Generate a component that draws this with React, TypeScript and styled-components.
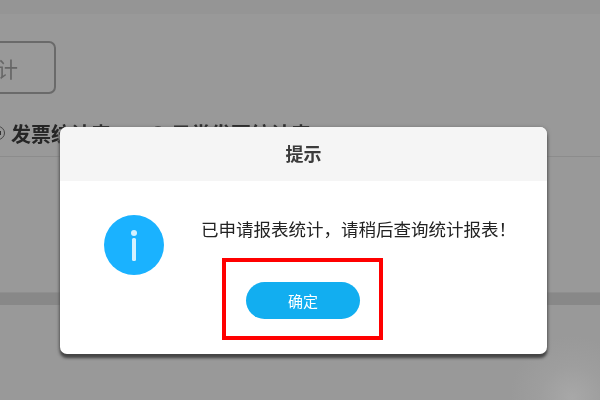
import React from "react";
import styled, { createGlobalStyle } from "styled-components";

const Global = createGlobalStyle`
  html, body { margin: 0; padding: 0; width: 600px; height: 400px; overflow: hidden; background: #999; }
  body { font-family: "Liberation Sans", "Noto Sans CJK SC", sans-serif; }
`;

const Page = styled.div`
  position: relative;
  width: 600px;
  height: 400px;
  overflow: hidden;
  display: flex;
  flex-direction: column;
  filter: blur(0.35px);
  background:
    radial-gradient(circle at 572px 398px, #a8a8a8 0, #9e9e9e 32px, rgba(153, 153, 153, 0) 62px),
    #999;
`;

const TopStrip = styled.div`
  height: 14px;
  flex: none;
  background: #959595;
`;

const Toolbar = styled.div`
  flex: none;
  height: 143px;
  box-sizing: border-box;
  padding-top: 27px;
  border-bottom: 1px solid #8c8c8c;
`;

const TabButton = styled.button`
  display: flex;
  align-items: center;
  justify-content: flex-end;
  box-sizing: border-box;
  width: 120px;
  height: 53px;
  margin: 0 0 0 -64px;
  padding: 0 36px 0 0;
  border: 2px solid #6a6a6a;
  border-radius: 7px;
  background: transparent;
  color: #666;
  font: 400 21px "Liberation Sans", "Noto Sans CJK SC", sans-serif;
  white-space: nowrap;
`;

const RadioRow = styled.div`
  display: flex;
  align-items: center;
  margin: 26px 0 0 -9px;
  height: 26px;
`;

const Radio = styled.span<{ $checked?: boolean }>`
  flex: none;
  box-sizing: border-box;
  width: 14px;
  height: 14px;
  margin-right: 6px;
  border: 1px solid #444;
  border-radius: 50%;
  background: ${(p) => (p.$checked ? "radial-gradient(circle, #333 0 3px, transparent 3.5px)" : "transparent")};
`;

const RadioLabel = styled.span<{ $width: number }>`
  flex: none;
  width: ${(p) => p.$width}px;
  color: #262626;
  font-size: 20px;
  font-weight: 700;
  white-space: nowrap;
`;

const Band = styled.div`
  flex: none;
  height: 12px;
  margin-top: 135px;
  background: #888;
  border-top: 1px solid #8f8f8f;
`;

const Modal = styled.div`
  position: absolute;
  left: 60px;
  top: 127px;
  width: 487px;
  height: 227px;
  display: flex;
  flex-direction: column;
  background: #fff;
  border-radius: 7px;
  box-shadow: 0 4px 3px #454545, 0 1px 4px #666;
  overflow: hidden;
`;

const ModalHeader = styled.div`
  flex: none;
  height: 54px;
  padding-bottom: 2px;
  box-sizing: border-box;
  display: flex;
  align-items: center;
  justify-content: center;
  background: #f5f5f5;
  color: #3c3c3c;
  font-size: 18px;
  font-weight: 700;
`;

const ModalBody = styled.div`
  flex: 1;
  display: flex;
  align-items: flex-start;
  padding: 34px 0 0 44px;
`;

const InfoIcon = styled.svg`
  flex: none;
  width: 60px;
  height: 60px;
`;

const Content = styled.div`
  display: flex;
  flex-direction: column;
  margin-left: 37px;
`;

const Message = styled.div`
  color: #222;
  font-size: 17.5px;
  line-height: 20px;
  margin-top: 5px;
  white-space: nowrap;
`;

const Highlight = styled.div`
  box-sizing: border-box;
  width: 161px;
  height: 82px;
  margin: 18px 0 0 21px;
  padding-top: 3px;
  display: flex;
  align-items: center;
  justify-content: center;
  border: 4px solid #f00;
`;

const ConfirmButton = styled.button`
  width: 114px;
  height: 37px;
  margin-left: 1px;
  border: 0;
  border-radius: 19px;
  background: #12aef0;
  color: #fff;
  font: 400 15px "Liberation Sans", "Noto Sans CJK SC", sans-serif;
`;

export default function App() {
  return (
    <Page>
      <Global />
      <TopStrip />
      <Toolbar>
        <TabButton>统计</TabButton>
        <RadioRow>
          <Radio $checked />
          <RadioLabel $width={140}>发票统计表</RadioLabel>
          <Radio />
          <RadioLabel $width={160}>日常发票统计表</RadioLabel>
        </RadioRow>
      </Toolbar>
      <Band />
      <Modal>
        <ModalHeader>提示</ModalHeader>
        <ModalBody>
          <InfoIcon viewBox="0 0 60 60">
            <circle cx="30" cy="30" r="30" fill="#1ab2ff" />
            <circle cx="30" cy="18" r="3" fill="#d4f1ff" />
            <rect x="28" y="23" width="4" height="23" rx="1.5" fill="#d4f1ff" />
          </InfoIcon>
          <Content>
            <Message>已申请报表统计，请稍后查询统计报表！</Message>
            <Highlight>
              <ConfirmButton>确定</ConfirmButton>
            </Highlight>
          </Content>
        </ModalBody>
      </Modal>
    </Page>
  );
}
